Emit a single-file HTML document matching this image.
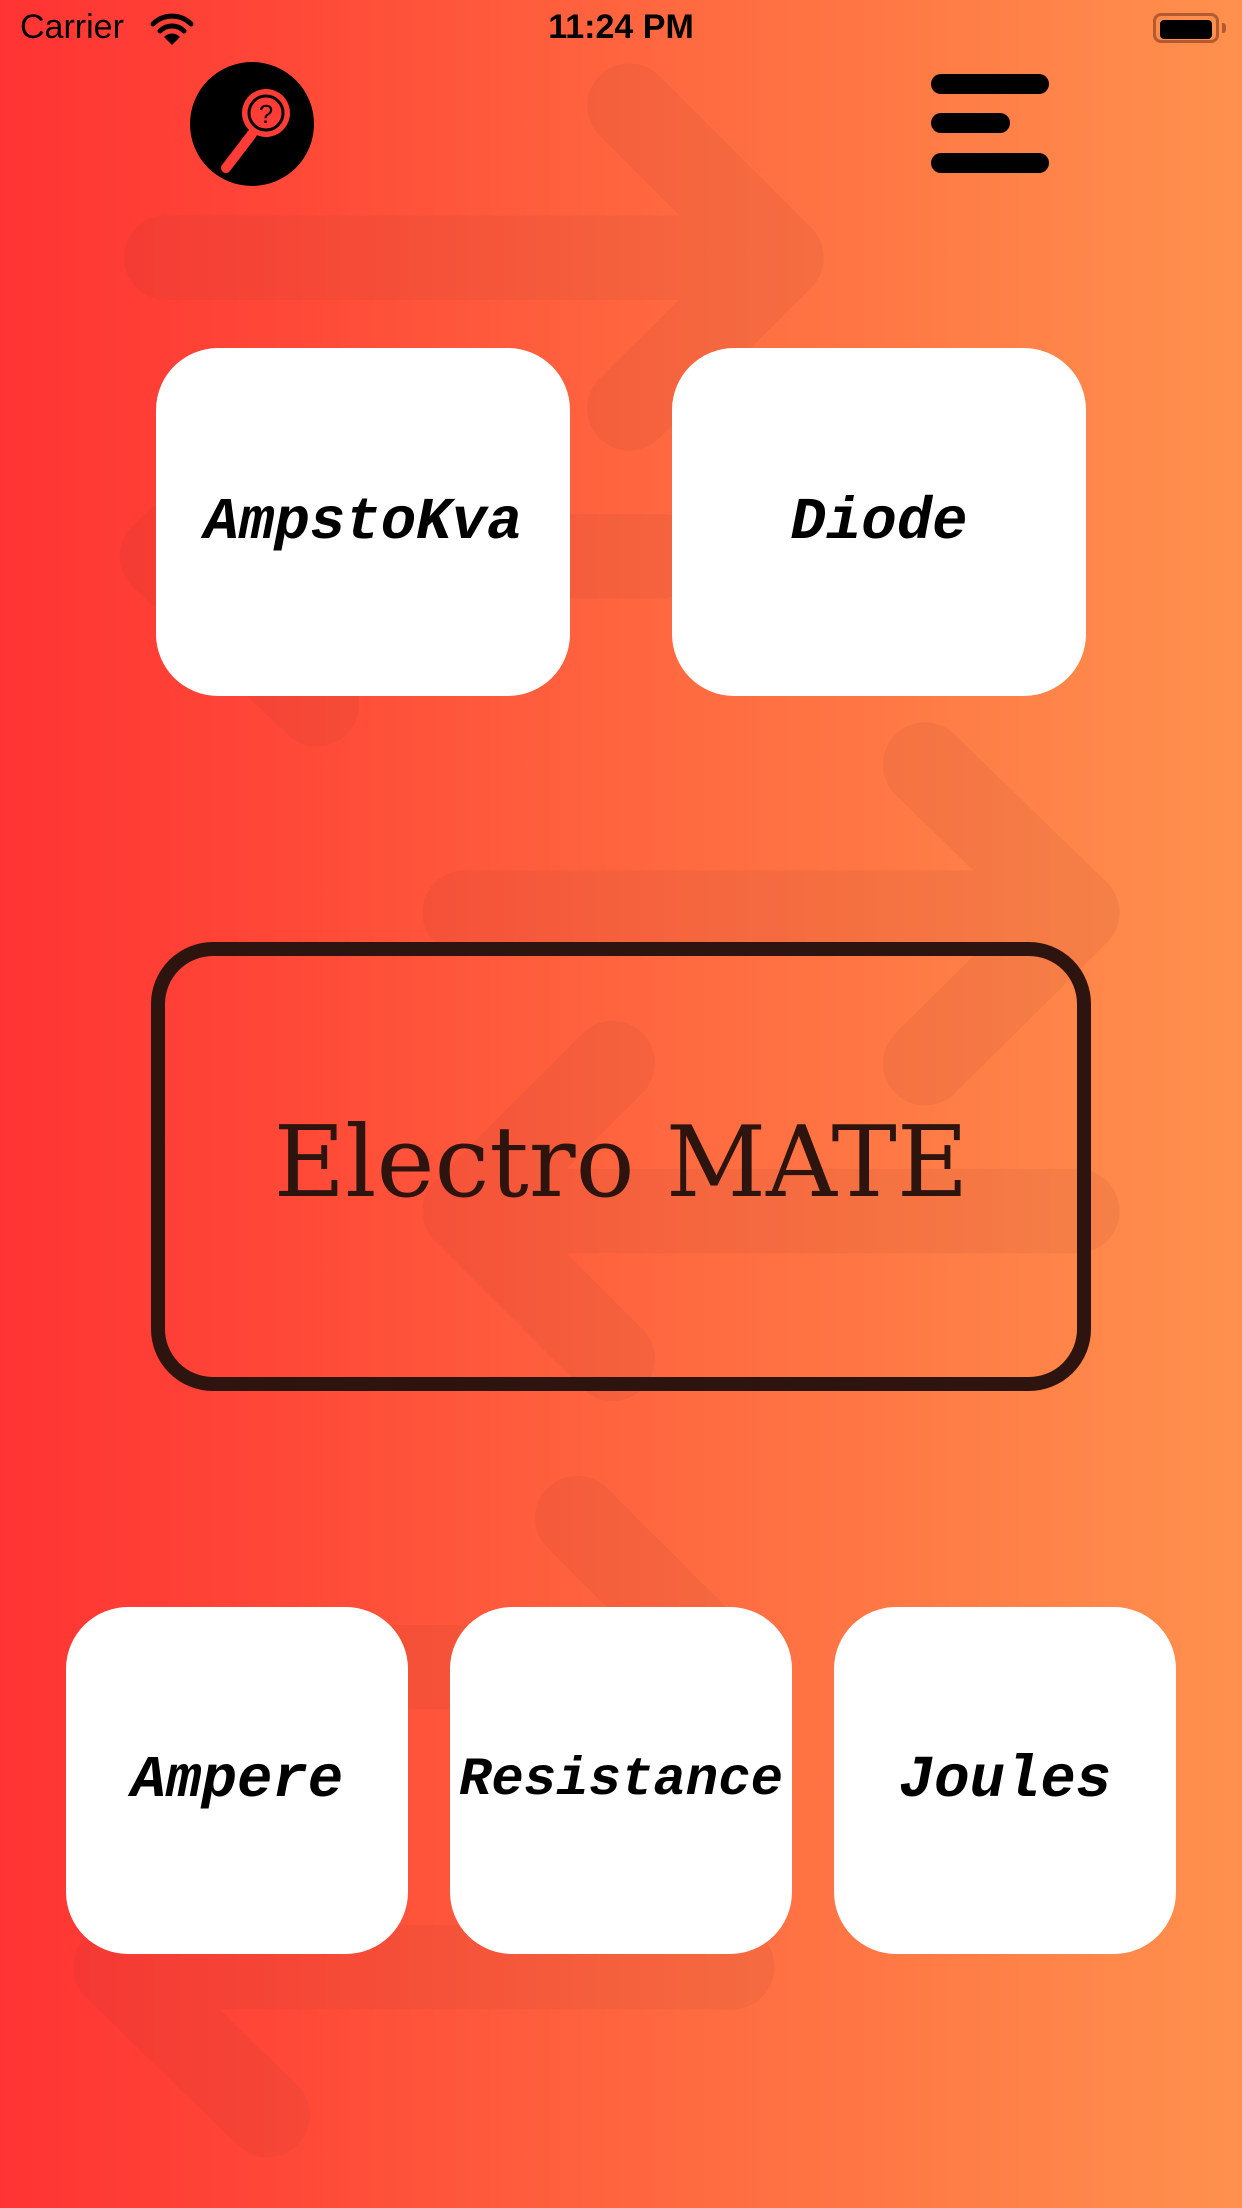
<!DOCTYPE html>
<html><head><meta charset="utf-8"><style>
html,body{margin:0;padding:0}
body{width:1242px;height:2208px;position:relative;overflow:hidden;background:linear-gradient(to right,#ff3333 0%,#ff4a38 25%,#ff6a40 55%,#ff914d 100%);font-family:"Liberation Sans",sans-serif}
.abs{position:absolute}
.card{position:absolute;background:#fff;border-radius:62px;display:flex;align-items:center;justify-content:center;font-family:"Liberation Mono","DejaVu Sans Mono",monospace;font-weight:bold;font-style:italic;font-size:59px;color:#000;white-space:nowrap}
.bar{position:absolute;background:#000;height:20px;border-radius:10px}
</style></head><body>
<svg class="abs" style="left:0;top:0" width="1242" height="2208" viewBox="0 0 882 1568" preserveAspectRatio="none">
<g fill="none" stroke="rgba(140,50,40,0.09)" stroke-width="60" stroke-linecap="round" stroke-linejoin="round">
<path d="M118 183 H550 M447 75 L555 183 L447 290"/>
<path d="M118 395 H470 M225 290 L115 395 L225 500"/>
<path d="M330 648 H765 M657 543 L765 648 L657 755"/>
<path d="M330 860 H765 M435 755 L330 860 L435 965"/>
<path d="M140 1184 H500 M410 1078 L516 1184 L410 1290"/>
<path d="M520 1397 H85 M190 1292 L82 1397 L190 1502"/>
</g>
</svg>
<div class="abs" style="left:20px;top:8px;font-size:34px;color:#000">Carrier</div>
<svg class="abs" style="left:150px;top:12px" width="44" height="34" viewBox="0 0 44 34"><path d="M3 12 A27 27 0 0 1 41 12" stroke="#000" stroke-width="5" fill="none" stroke-linecap="round"/><path d="M10 19 A17 17 0 0 1 34 19" stroke="#000" stroke-width="5" fill="none" stroke-linecap="round"/><path d="M22 33 L14 25 A11 11 0 0 1 30 25 Z" fill="#000"/></svg>
<div class="abs" style="left:0;width:1242px;text-align:center;top:8px;font-size:34px;color:#000;font-weight:bold">11:24 PM</div>
<div class="abs" style="left:1153px;top:13px;border:3px solid #b55a2e;border-radius:8px;width:60px;height:24px"></div>
<div class="abs" style="left:1160px;top:20px;width:52px;height:19px;background:#000;border-radius:4px"></div>
<div class="abs" style="left:1222px;top:23px;width:4px;height:10px;background:#b55a2e;border-radius:0 3px 3px 0"></div>
<svg class="abs" style="left:190px;top:62px" width="124" height="124" viewBox="0 0 124 124">
<circle cx="62" cy="62" r="62" fill="#000"/>
<circle cx="76" cy="51" r="24" fill="#ff3d36"/>
<circle cx="76" cy="51" r="17" fill="none" stroke="#000" stroke-width="3"/>
<text x="76" y="61" font-family="Liberation Sans" font-size="26" text-anchor="middle" fill="#000">?</text>
<path d="M62 72 L36 106" stroke="#ff3d36" stroke-width="10" stroke-linecap="round"/>
</svg>
<div class="bar" style="left:931px;top:74px;width:118px"></div>
<div class="bar" style="left:931px;top:113px;width:79px"></div>
<div class="bar" style="left:931px;top:153px;width:118px"></div>
<div class="card" style="left:156px;top:348px;width:414px;height:348px">AmpstoKva</div>
<div class="card" style="left:672px;top:348px;width:414px;height:348px">Diode</div>
<div class="abs" style="left:151px;top:942px;width:940px;height:449px;box-sizing:border-box;border:14px solid #2e140f;border-radius:62px;display:flex;align-items:center;justify-content:center;font-family:'DejaVu Serif','Liberation Serif',serif;font-size:98px;color:#2e140f;padding-bottom:8px">Electro MATE</div>
<div class="card" style="left:66px;top:1607px;width:342px;height:347px">Ampere</div>
<div class="card" style="left:450px;top:1607px;width:342px;height:347px;font-size:54px">Resistance</div>
<div class="card" style="left:834px;top:1607px;width:342px;height:347px">Joules</div>
</body></html>
